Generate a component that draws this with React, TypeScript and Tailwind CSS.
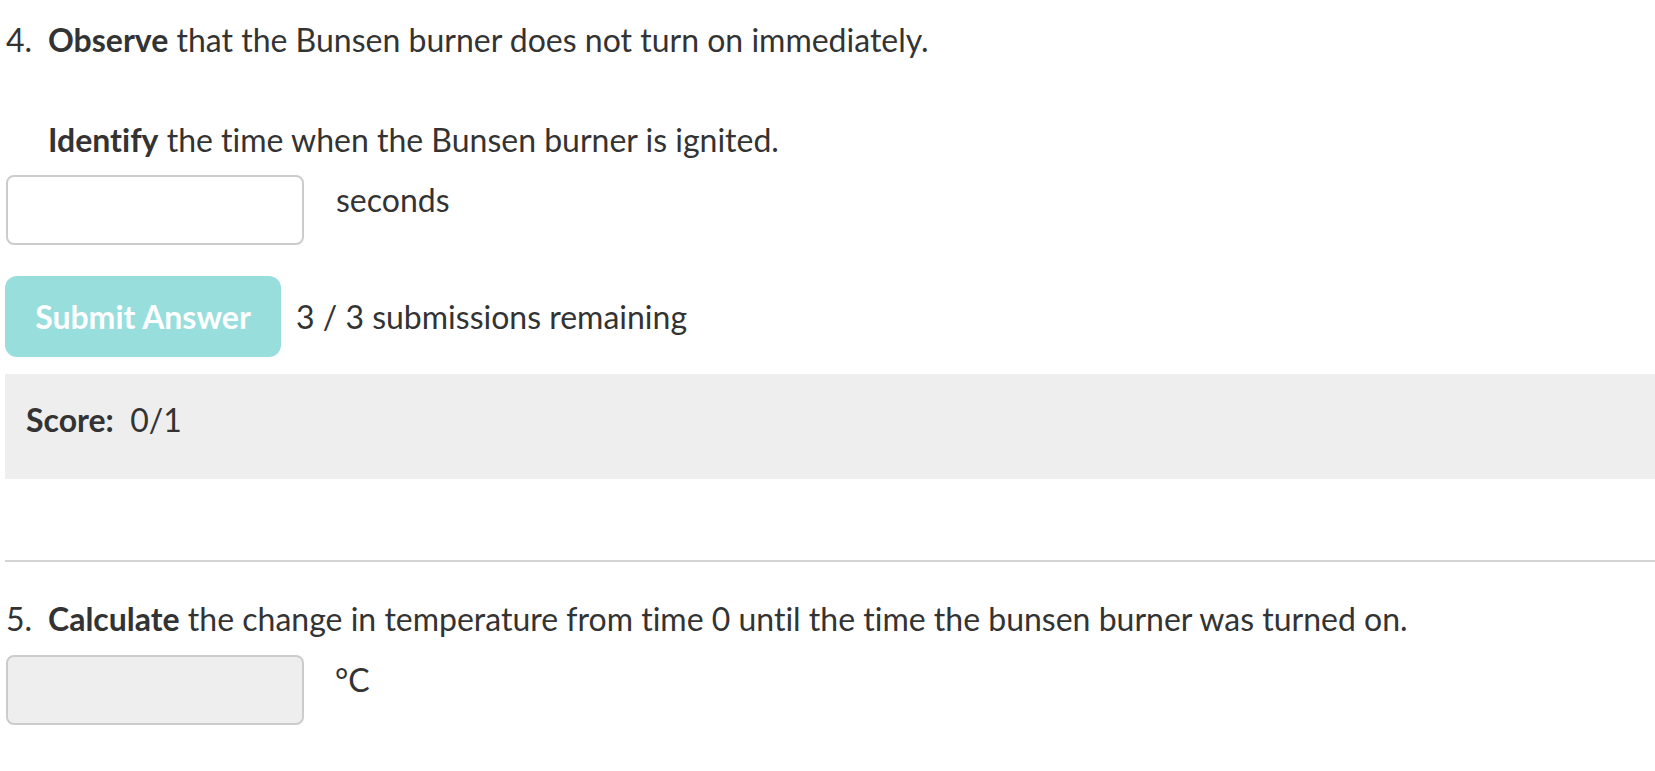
import React from "react";

export default function App() {
  return (
    <div className="min-h-screen bg-white font-['Lato','Liberation_Sans',sans-serif] text-[32px] text-[#333333] overflow-hidden [font-variant-ligatures:none]">
      {/* Question 4 */}
      <div className="flex pt-[20px] leading-[40px]">
        <span className="w-[48px] shrink-0 pl-[6px]">4.</span>
        <p>
          <b className="font-bold">Observe</b> that the Bunsen burner does not turn on immediately.
        </p>
      </div>

      <p className="pl-[48px] mt-[60px] leading-[40px]">
        <b className="font-bold">Identify</b> the time when the Bunsen burner is ignited.
      </p>

      <div className="flex items-start mt-[15px] pl-[6px]">
        <input
          type="text"
          className="w-[298px] h-[70px] border-2 border-[#cccccc] rounded-[8px] bg-white outline-none"
        />
        <span className="ml-[32px] mt-[5px] leading-[40px]">seconds</span>
      </div>

      <div className="flex items-center mt-[31px] pl-[5px]">
        <button className="w-[276px] h-[81px] rounded-[12px] bg-[#97dedd] text-white font-bold">
          Submit Answer
        </button>
        <span className="ml-[15px]">3 / 3 submissions remaining</span>
      </div>

      <div className="ml-[5px] mt-[17px] h-[105px] bg-[#eeeeee] pl-[21px] pt-[26px] leading-[40px]">
        <b className="font-bold">Score:</b>&nbsp; 0/1
      </div>

      <div className="ml-[5px] mt-[81px] h-[2px] bg-[#d4d4d4]" />

      {/* Question 5 */}
      <div className="flex mt-[37px] leading-[40px]">
        <span className="w-[48px] shrink-0 pl-[6px]">5.</span>
        <p>
          <b className="font-bold">Calculate</b> the change in temperature from time 0 until the time the bunsen burner was turned on.
        </p>
      </div>

      <div className="flex items-start mt-[16px] pl-[6px]">
        <input
          type="text"
          disabled
          className="w-[298px] h-[70px] border-2 border-[#cccccc] rounded-[8px] bg-[#eeeeee] outline-none"
        />
        <span className="ml-[31px] mt-[5px] leading-[40px]">°C</span>
      </div>

      <p className="pl-[42px] mt-[42px] leading-[40px]">
        <b className="font-bold">Identify</b> the final temperature that the water reached.
      </p>
    </div>
  );
}
